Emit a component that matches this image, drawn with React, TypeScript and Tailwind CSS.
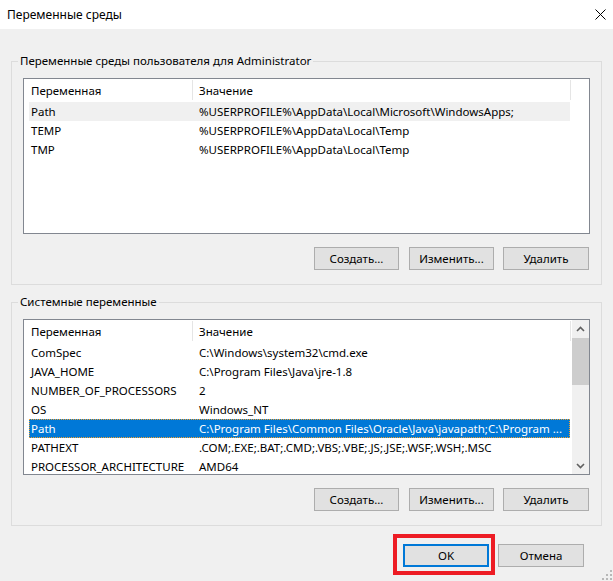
import type { ReactNode } from 'react';

type RowState = 'normal' | 'inactive' | 'selected';

const userVars: [string, string][] = [
  ['Path', '%USERPROFILE%\\AppData\\Local\\Microsoft\\WindowsApps;'],
  ['TEMP', '%USERPROFILE%\\AppData\\Local\\Temp'],
  ['TMP', '%USERPROFILE%\\AppData\\Local\\Temp'],
];

const systemVars: [string, string][] = [
  ['ComSpec', 'C:\\Windows\\system32\\cmd.exe'],
  ['JAVA_HOME', 'C:\\Program Files\\Java\\jre-1.8'],
  ['NUMBER_OF_PROCESSORS', '2'],
  ['OS', 'Windows_NT'],
  ['Path', 'C:\\Program Files\\Common Files\\Oracle\\Java\\javapath;C:\\Program ...'],
  ['PATHEXT', '.COM;.EXE;.BAT;.CMD;.VBS;.VBE;.JS;.JSE;.WSF;.WSH;.MSC'],
  ['PROCESSOR_ARCHITECTURE', 'AMD64'],
];

function Row({ name, value, state }: { name: string; value: string; state: RowState }) {
  const look =
    state === 'selected'
      ? 'bg-[#0078d7] text-white outline outline-1 outline-dotted outline-[#f0a030] -outline-offset-1'
      : state === 'inactive'
        ? 'bg-[#f0f0f0]'
        : '';
  return (
    <div className={`ml-[5px] flex h-[19px] w-[541px] shrink-0 items-center whitespace-nowrap ${look}`}>
      <div className="w-[170px] shrink-0 overflow-hidden pl-[2px]">{name}</div>
      <div className="min-w-0">{value}</div>
    </div>
  );
}

function Header() {
  return (
    <div className="flex h-[23px] shrink-0 items-start">
      <div className="flex h-[23px] w-[168px] items-center pl-[7px]">Переменная</div>
      <div className="mt-[1px] h-[20px] w-px bg-[#e5e5e5]" />
      <div className="flex h-[23px] w-[377px] items-center pl-[6px]">Значение</div>
      <div className="mt-[1px] h-[20px] w-px bg-[#e5e5e5]" />
    </div>
  );
}

function Chevron({ up }: { up?: boolean }) {
  return (
    <svg width="9" height="6" viewBox="0 0 9 6">
      <path
        d={up ? 'M1 5 L4.5 1.5 L8 5' : 'M1 1 L4.5 4.5 L8 1'}
        fill="none"
        stroke="#606060"
        strokeWidth="1.6"
      />
    </svg>
  );
}

function Scrollbar() {
  return (
    <div className="flex w-[17px] shrink-0 flex-col bg-[#f0f0f0]">
      <div className="flex h-[18px] items-center justify-center">
        <Chevron up />
      </div>
      <div className="h-[47px] bg-[#cdcdcd]" />
      <div className="flex-1" />
      <div className="flex h-[17px] items-center justify-center">
        <Chevron />
      </div>
    </div>
  );
}

function VarList({ vars, active, selectedIndex, scroll }: { vars: [string, string][]; active: boolean; selectedIndex: number; scroll?: boolean }) {
  return (
    <div className="flex h-[156px] overflow-hidden border border-[#828790] bg-white">
      <div className="flex min-w-0 flex-1 flex-col">
        <Header />
        {vars.map(([name, value], i) => (
          <Row
            key={name}
            name={name}
            value={value}
            state={i === selectedIndex ? (active ? 'selected' : 'inactive') : 'normal'}
          />
        ))}
      </div>
      {scroll && <Scrollbar />}
    </div>
  );
}

function Btn({ children, className = '' }: { children: ReactNode; className?: string }) {
  return (
    <button className={`h-[23px] shrink-0 bg-[#e1e1e1] text-[11.5px] text-black ${className}`}>
      {children}
    </button>
  );
}

function ActionButtons() {
  return (
    <div className="mt-[13px] flex justify-end pr-[1px]">
      <Btn className="w-[85px] border border-[#adadad]">Создать...</Btn>
      <Btn className="ml-[10px] w-[85px] border border-[#adadad]">Изменить...</Btn>
      <Btn className="ml-[9px] w-[86px] border border-[#adadad]">Удалить</Btn>
    </div>
  );
}

function Group({ title, children }: { title: string; children: ReactNode }) {
  return (
    <fieldset className="border border-[#dcdcdc] p-0">
      <legend className="ml-[6px] px-[2px] leading-[16px]">{title}</legend>
      <div className="px-[11px] pb-[14px] pt-[9px]">{children}</div>
    </fieldset>
  );
}

export default function App() {
  return (
    <div className="relative flex h-[581px] w-[613px] flex-col overflow-hidden bg-[#f0f0f0] font-['Segoe_UI','Noto_Sans',sans-serif] text-[11.5px] text-black">
      {/* Title bar */}
      <div className="flex h-[29px] shrink-0 items-center justify-between bg-white pl-[7px] pr-[7px]">
        <span className="text-[12px]">Переменные среды</span>
        <svg width="11" height="11" viewBox="0 0 11 11">
          <path d="M0.5 0.5 L10.5 10.5 M10.5 0.5 L0.5 10.5" stroke="#000" strokeWidth="1" />
        </svg>
      </div>

      <div className="flex flex-col px-[11px] pt-[24px]">
        <Group title="Переменные среды пользователя для Administrator">
          <VarList vars={userVars} active={false} selectedIndex={0} />
          <ActionButtons />
        </Group>

        <div className="mt-[9px]">
          <Group title="Системные переменные">
            <VarList vars={systemVars} active selectedIndex={4} scroll />
            <ActionButtons />
          </Group>
        </div>

        <div className="mt-[18px] flex justify-end pr-[18px]">
          <div className="relative">
            <Btn className="w-[86px] border-2 border-[#0078d7]">OK</Btn>
            {/* red highlight frame drawn over the dialog */}
            <div className="pointer-events-none absolute -bottom-[8px] -left-[10px] -right-[6px] -top-[10px] border-4 border-[#ed1c24]" />
          </div>
          <Btn className="ml-[9px] w-[86px] border border-[#adadad]">Отмена</Btn>
        </div>
      </div>

      {/* size grip */}
      <svg className="absolute bottom-[1px] right-[1px]" width="11" height="11" viewBox="0 0 11 11">
        <rect x="9" y="1" width="2" height="2" fill="#b8b8b8" />
        <rect x="5" y="5" width="2" height="2" fill="#b8b8b8" />
        <rect x="9" y="5" width="2" height="2" fill="#b8b8b8" />
        <rect x="1" y="9" width="2" height="2" fill="#b8b8b8" />
        <rect x="5" y="9" width="2" height="2" fill="#b8b8b8" />
        <rect x="9" y="9" width="2" height="2" fill="#b8b8b8" />
      </svg>
    </div>
  );
}
